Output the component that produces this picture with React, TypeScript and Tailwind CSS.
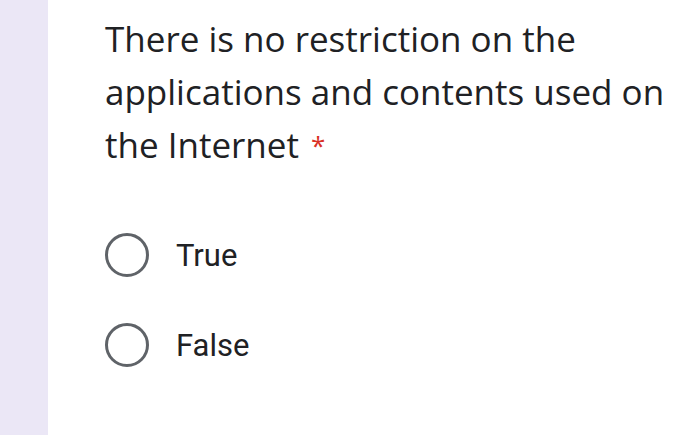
export default function App() {
  const options = ["True", "False"];
  return (
    <div className="flex h-[435px] w-[700px] bg-white">
      <div className="w-[48px] shrink-0 bg-[#ebe7f6]" />
      <div className="flex-1 pl-[57px] pt-[12px]">
        <p className="text-[35px] leading-[53px] text-[#202124] font-['Open_Sans',sans-serif]">
          There is no restriction on the
          <br />
          applications and contents used on
          <br />
          the Internet
          <span className="ml-[12px] align-[3px] text-[26px] leading-none text-[#d93025]">*</span>
        </p>
        <div className="mt-[62px] flex flex-col gap-[46px] font-['Roboto',sans-serif]">
          {options.map((o) => (
            <label key={o} className="flex items-center gap-[27px]">
              <span className="h-[44px] w-[44px] rounded-full border-[3px] border-[#5f6368]" />
              <span className="text-[31px] leading-none text-[#202124]">{o}</span>
            </label>
          ))}
        </div>
      </div>
    </div>
  );
}
